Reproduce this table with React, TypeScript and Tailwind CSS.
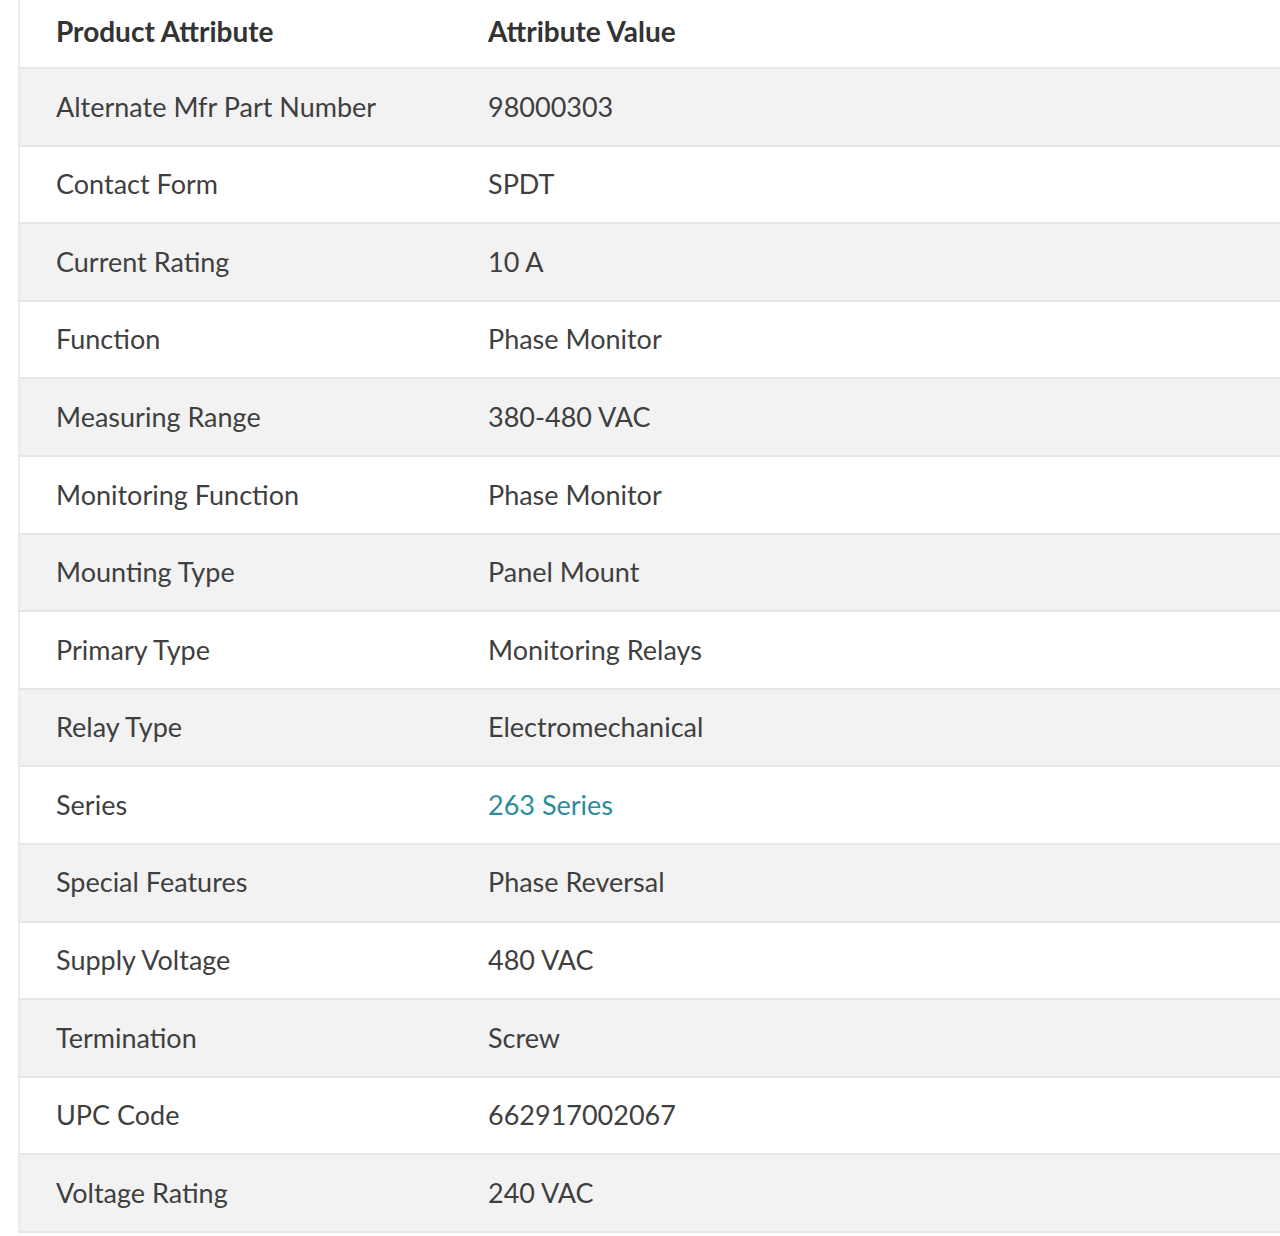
const rows: { name: string; value: string; link?: boolean }[] = [
  { name: 'Alternate Mfr Part Number', value: '98000303' },
  { name: 'Contact Form', value: 'SPDT' },
  { name: 'Current Rating', value: '10 A' },
  { name: 'Function', value: 'Phase Monitor' },
  { name: 'Measuring Range', value: '380-480 VAC' },
  { name: 'Monitoring Function', value: 'Phase Monitor' },
  { name: 'Mounting Type', value: 'Panel Mount' },
  { name: 'Primary Type', value: 'Monitoring Relays' },
  { name: 'Relay Type', value: 'Electromechanical' },
  { name: 'Series', value: '263 Series', link: true },
  { name: 'Special Features', value: 'Phase Reversal' },
  { name: 'Supply Voltage', value: '480 VAC' },
  { name: 'Termination', value: 'Screw' },
  { name: 'UPC Code', value: '662917002067' },
  { name: 'Voltage Rating', value: '240 VAC' },
];

export default function App() {
  return (
    <div className="bg-white min-h-[1236px] pl-[18px] font-['Lato','Noto_Sans',sans-serif] text-[27px] text-[#3f3f3f]">
      <table className="w-full border-l-2 border-[#ececec] border-collapse">
        <thead>
          <tr className="h-[68px] border-b-2 border-[#e6e6e6]">
            <th className="w-[469px] pl-[36px] pb-[5px] text-left text-[28px] font-bold text-[#333]">Product Attribute</th>
            <th className="pb-[5px] text-left text-[28px] font-bold text-[#333]">Attribute Value</th>
          </tr>
        </thead>
        <tbody>
          {rows.map((r, i) => (
            <tr
              key={r.name}
              className={`h-[77.6px] border-b-2 border-[#e6e6e6] ${i % 2 === 0 ? 'bg-[#f2f2f2]' : 'bg-white'}`}
            >
              <td className="pl-[36px]">{r.name}</td>
              <td>
                {r.link ? <a href="#" className="text-[#2c8c9c]">{r.value}</a> : r.value}
              </td>
            </tr>
          ))}
        </tbody>
      </table>
    </div>
  );
}
